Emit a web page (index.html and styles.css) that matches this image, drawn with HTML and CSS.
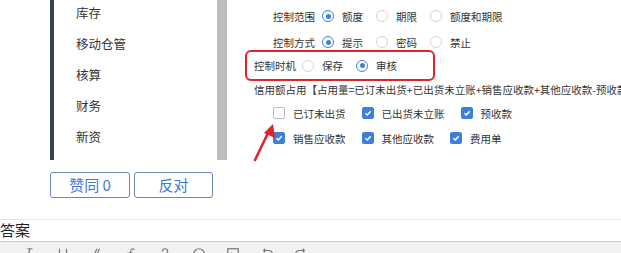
FILE: index.html
```html
<!DOCTYPE html>
<html lang="zh-CN">
<head>
<meta charset="utf-8">
<title>信用控制</title>
<link rel="stylesheet" href="styles.css">
</head>
<body>
<div class="page">
  <div class="top">
    <div class="gutter"></div>
    <nav class="menu">
      <div class="menu-list">
        <div class="menu-item">库存</div>
        <div class="menu-item">移动仓管</div>
        <div class="menu-item">核算</div>
        <div class="menu-item">财务</div>
        <div class="menu-item">新资</div>
      </div>
    </nav>
    <div class="scrollbar"></div>
    <div class="content">
      <div class="row row-first indent">
        <span class="label">控制范围</span>
        <span class="opt"><span class="radio on"></span>额度</span>
        <span class="opt"><span class="radio"></span>期限</span>
        <span class="opt"><span class="radio"></span>额度和期限</span>
      </div>
      <div class="row row-second indent">
        <span class="label">控制方式</span>
        <span class="opt"><span class="radio on"></span>提示</span>
        <span class="opt"><span class="radio"></span>密码</span>
        <span class="opt"><span class="radio"></span>禁止</span>
      </div>
      <div class="highlight">
        <span class="label label-tight">控制时机</span>
        <span class="opt"><span class="radio"></span>保存</span>
        <span class="opt"><span class="radio on"></span>审核</span>
      </div>
      <div class="row row-formula">信用额占用【占用量=已订未出货+已出货未立账+销售应收款+其他应收款-预收款-费用单】</div>
      <div class="row row-cb1 indent">
        <span class="cb-item"><span class="cb"></span>已订未出货</span>
        <span class="cb-item"><span class="cb on"><svg viewBox="0 0 12 12"><path d="M3 6.2 L5.2 8.4 L9.2 3.8" /></svg></span>已出货未立账</span>
        <span class="cb-item"><span class="cb on"><svg viewBox="0 0 12 12"><path d="M3 6.2 L5.2 8.4 L9.2 3.8" /></svg></span>预收款</span>
      </div>
      <div class="row row-cb2 indent">
        <span class="cb-item"><span class="cb on"><svg viewBox="0 0 12 12"><path d="M3 6.2 L5.2 8.4 L9.2 3.8" /></svg></span>销售应收款</span>
        <span class="cb-item"><span class="cb on"><svg viewBox="0 0 12 12"><path d="M3 6.2 L5.2 8.4 L9.2 3.8" /></svg></span>其他应收款</span>
        <span class="cb-item"><span class="cb on"><svg viewBox="0 0 12 12"><path d="M3 6.2 L5.2 8.4 L9.2 3.8" /></svg></span>费用单</span>
      </div>
    </div>
  </div>

  <div class="votes">
    <button class="vote-btn vote-yes">赞同 0</button>
    <button class="vote-btn vote-no">反对</button>
  </div>

  <div class="answer">
    <div class="answer-title">答案</div>
    <div class="toolbar">
      <svg class="tool" viewBox="0 0 16 16"><path d="M6 2 H12 M9 2 L6 14 M3 14 H9" /></svg>
      <svg class="tool" viewBox="0 0 16 16"><path d="M4 2 V8 A4 4 0 0 0 12 8 V2 M3 14 H13" /></svg>
      <svg class="tool" viewBox="0 0 16 16"><path d="M11 2 L7 10 M8 2 L4 10 M2 12 H14" /></svg>
      <svg class="tool" viewBox="0 0 16 16"><path d="M12 3 C9 1 8 3 7 7 L5 14 M4 7 H10" /></svg>
      <svg class="tool" viewBox="0 0 16 16"><path d="M5 5 A3 3 0 0 1 11 5 C11 8 8 8 8 10 M8 13 V14" /></svg>
      <svg class="tool" viewBox="0 0 16 16"><circle cx="8" cy="8" r="6" /></svg>
      <svg class="tool" viewBox="0 0 16 16"><rect x="2" y="2" width="12" height="12" /><path d="M2 10 L6 7 L10 11" /></svg>
      <svg class="tool" viewBox="0 0 16 16"><path d="M4 4 H10 A4 4 0 0 1 10 12 H6 M4 4 L6 2 M4 4 L6 6" /></svg>
      <svg class="tool" viewBox="0 0 16 16"><path d="M12 4 H6 A4 4 0 0 0 6 12 H10 M12 4 L10 2 M12 4 L10 6" /></svg>
    </div>
  </div>

  <svg class="arrow" viewBox="0 0 40 50" width="40" height="50">
    <path class="arrow-shaft" d="M5 42 L18 15" />
    <path class="arrow-head" d="M23 6 L25 20 L14 15 Z" />
  </svg>
</div>
</body>
</html>
```

FILE: styles.css
```css
* { box-sizing: border-box; }

html, body {
  margin: 0;
  padding: 0;
  background: #ffffff;
}

body {
  font-family: "Noto Sans CJK SC", "Noto Sans", sans-serif;
  color: #333333;
  width: 621px;
  height: 253px;
  overflow: hidden;
}

.page {
  position: relative;
  width: 621px;
  height: 253px;
  overflow: hidden;
}

.top {
  display: flex;
  height: 160px;
}

.gutter {
  width: 50px;
  flex: none;
}

.menu {
  width: 167px;
  flex: none;
  border-left: 4px solid #3b4250;
  background: #ffffff;
  overflow: hidden;
}

.menu-list {
  margin-top: -3px;
  padding-left: 22px;
}

.menu-item {
  height: 31px;
  line-height: 31px;
  font-size: 12.5px;
  color: #333333;
}

.scrollbar {
  width: 10px;
  flex: none;
  background: #bdbdbd;
}

.content {
  flex: 1;
  padding-top: 6px;
  padding-left: 3px;
  white-space: nowrap;
  overflow: hidden;
  font-size: 10.5px;
  color: #333333;
}

.row {
  display: flex;
  align-items: center;
}

.indent { padding-left: 43px; }

.row-first { height: 20px; }
.row-second { height: 20px; margin-top: 6px; }

.highlight {
  display: flex;
  align-items: center;
  margin-top: -2px;
  margin-left: 15px;
  width: 190px;
  height: 31px;
  border: 2px solid #e1232b;
  border-radius: 6px;
  padding-left: 7px;
}

.row-formula {
  height: 16px;
  padding-left: 24px;
}

.row-cb1 { height: 16px; margin-top: 8px; }
.row-cb2 { height: 16px; margin-top: 9px; }

.label { margin-right: 7px; }
.label-tight { margin-right: 6px; }

.opt {
  display: inline-flex;
  align-items: center;
  margin-right: 13px;
}

.radio {
  width: 12px;
  height: 12px;
  border: 1px solid #d4d4d4;
  border-radius: 50%;
  margin-right: 8px;
  background: #ffffff;
  display: inline-flex;
  align-items: center;
  justify-content: center;
  flex: none;
}

.radio.on {
  border-color: #3f7fdc;
}

.radio.on::after {
  content: "";
  width: 5px;
  height: 5px;
  border-radius: 50%;
  background: #3f7fdc;
}

.cb-item {
  display: inline-flex;
  align-items: center;
  margin-right: 16px;
}

.cb {
  width: 12px;
  height: 12px;
  border: 1px solid #b9b9b9;
  border-radius: 2px;
  margin-right: 8px;
  background: #ffffff;
  flex: none;
  display: inline-flex;
}

.cb.on {
  border-color: #3f7fdc;
  background: #3f7fdc;
}

.cb svg {
  width: 10px;
  height: 10px;
  fill: none;
  stroke: #ffffff;
  stroke-width: 1.8;
}

.votes {
  display: flex;
  gap: 4px;
  margin-top: 12px;
  margin-left: 50px;
}

.vote-btn {
  height: 26px;
  border: 1px solid #6a89b0;
  border-radius: 3px;
  background: #ffffff;
  color: #3b78d4;
  font-family: "Noto Sans CJK SC", "Noto Sans", sans-serif;
  font-size: 15px;
  padding: 0;
  line-height: 24px;
}

.vote-yes { width: 80px; }
.vote-no { width: 79px; }

.answer {
  margin-top: 21px;
  border-top: 1px solid #e6e6e6;
}

.answer-title {
  height: 21px;
  line-height: 20px;
  font-size: 15px;
  color: #222222;
}

.toolbar {
  border-top: 1px solid #c9c9c9;
  background: #f1f1f1;
  height: 30px;
  display: flex;
  gap: 20px;
  padding-left: 22px;
  padding-top: 5px;
}

.tool {
  width: 14px;
  height: 14px;
  fill: none;
  stroke: #7a7a7a;
  stroke-width: 1.4;
  flex: none;
}

.arrow {
  position: absolute;
  left: 250px;
  top: 118px;
}

.arrow-shaft {
  stroke: #e2242a;
  stroke-width: 2.6;
  stroke-linecap: round;
  fill: none;
}

.arrow-head {
  fill: #e2242a;
}
```
